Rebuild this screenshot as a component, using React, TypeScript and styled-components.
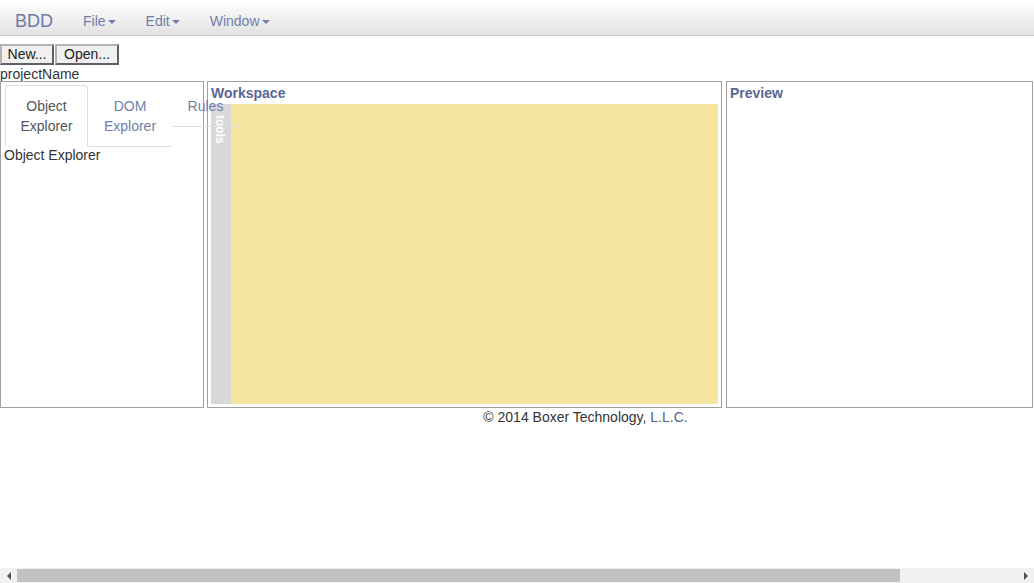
import React, { useState } from "react";
import styled, { createGlobalStyle } from "styled-components";

const GlobalStyle = createGlobalStyle`
  html, body {
    margin: 0;
    padding: 0;
    overflow: hidden;
  }
  body {
    font-family: "Liberation Sans", Arial, sans-serif;
    font-size: 14px;
    line-height: 20px;
    color: #333;
    background: #fff;
  }
`;

const Navbar = styled.div`
  height: 35px;
  border-bottom: 1px solid #c8c8c8;
  background: linear-gradient(to bottom, #ffffff 0%, #e2e2e2 100%);
  display: flex;
  align-items: flex-start;
`;

const Brand = styled.a`
  padding: 10px 15px 0;
  font-size: 18px;
  line-height: 22px;
  color: #6c7aa6;
  text-decoration: none;
`;

const NavItem = styled.a`
  padding: 11px 15px 0;
  color: #6f7fab;
  line-height: 20px;
  text-decoration: none;
  display: flex;
  align-items: center;
`;

const Caret = styled.span`
  display: inline-block;
  width: 0;
  height: 0;
  margin-left: 2px;
  margin-top: 2px;
  border-top: 4px solid #6f7fab;
  border-left: 4px solid transparent;
  border-right: 4px solid transparent;
`;

const Toolbar = styled.div`
  display: flex;
  gap: 1px;
  padding-top: 8px;
`;

const Button = styled.button<{ $width: number }>`
  width: ${(p) => p.$width}px;
  height: 21px;
  padding: 0;
  font-family: "Liberation Sans", Arial, sans-serif;
  font-size: 14px;
  line-height: 17px;
  color: #222;
  background: #f0f0f0;
  border: 2px outset #b4b4b4;
  margin: 0;
`;

const ProjectName = styled.div`
  height: 16px;
  line-height: 18px;
`;

const Panels = styled.div`
  width: 1034px;
  height: 327px;
  display: grid;
  grid-template-columns: 204px 515px 308px;
  column-gap: 3px;
`;

const Panel = styled.div<{ $gapLeft?: number }>`
  border: 1px solid #a0a0a0;
  margin-left: ${(p) => p.$gapLeft ?? 0}px;
  display: flex;
  flex-direction: column;
  min-width: 0;
`;

const ExplorerBody = styled.div`
  padding: 3px 0 0 4px;
`;

const Tabs = styled.ul`
  list-style: none;
  margin: 0;
  padding: 0;
  width: 167px;
  display: flex;
  align-items: flex-start;
`;

const Tab = styled.li<{ $active?: boolean; $width: number }>`
  flex: none;
  width: ${(p) => p.$width}px;
  box-sizing: border-box;
  padding: 10px 0;
  text-align: center;
  color: ${(p) => (p.$active ? "#555" : "#6f7fab")};
  border: 1px solid ${(p) => (p.$active ? "#ddd" : "transparent")};
  border-bottom-color: ${(p) => (p.$active ? "transparent" : "#ddd")};
  border-radius: ${(p) => (p.$active ? "4px 4px 0 0" : "0")};
  cursor: pointer;
  position: relative;
`;

const TabContent = styled.div`
  line-height: 16px;
  padding-left: 3px;
`;

const PanelTitle = styled.div`
  height: 21px;
  line-height: 21px;
  font-weight: bold;
  color: #5a6794;
`;

const PanelInner = styled.div`
  padding: 1px 3px 3px;
  flex: 1;
  display: flex;
  flex-direction: column;
`;

const Canvas = styled.div`
  flex: 1;
  display: flex;
`;

const ToolStrip = styled.div`
  width: 20px;
  background: #d8d8d8;
  color: #fff;
  font-weight: bold;
  font-size: 12px;
  writing-mode: vertical-rl;
  line-height: 22px;
  padding-top: 11px;
  box-sizing: border-box;
`;

const Stage = styled.div`
  flex: 1;
  background: #f5e59e;
`;

const Footer = styled.div`
  text-align: center;
  line-height: 18px;
  padding-left: 137px;
`;

const FooterLink = styled.a`
  color: #55618a;
  text-decoration: none;
`;

const ScrollBar = styled.div`
  position: fixed;
  left: 0;
  right: 0;
  bottom: 0;
  height: 15px;
  background: #f1f1f1;
  display: flex;
  align-items: center;
`;

const Arrow = styled.span<{ $dir: "left" | "right" }>`
  width: 17px;
  display: flex;
  justify-content: center;
  &::before {
    content: "";
    width: 0;
    height: 0;
    border-top: 4px solid transparent;
    border-bottom: 4px solid transparent;
    ${(p) =>
      p.$dir === "left"
        ? "border-right: 4px solid #505050;"
        : "border-left: 4px solid #505050;"}
  }
`;

const Track = styled.div`
  flex: 1;
  height: 13px;
`;

const Thumb = styled.div`
  height: 100%;
  background: #c1c1c1;
`;

const tabs = [
  { label: "Object Explorer", width: 83 },
  { label: "DOM Explorer", width: 84 },
  { label: "Rules", width: 67 },
];

export default function App() {
  const [active, setActive] = useState(0);
  const thumbRatio = 1034 / 1171;

  return (
    <>
      <GlobalStyle />
      <Navbar>
        <Brand>BDD</Brand>
        <NavItem>
          File
          <Caret />
        </NavItem>
        <NavItem>
          Edit
          <Caret />
        </NavItem>
        <NavItem>
          Window
          <Caret />
        </NavItem>
      </Navbar>
      <Toolbar>
        <Button $width={54}>New...</Button>
        <Button $width={64}>Open...</Button>
      </Toolbar>
      <ProjectName>projectName</ProjectName>
      <Panels>
        <Panel>
          <ExplorerBody>
            <Tabs>
              {tabs.map((t, i) => (
                <Tab
                  key={t.label}
                  $width={t.width}
                  $active={i === active}
                  onClick={() => setActive(i)}
                >
                  {t.label}
                </Tab>
              ))}
            </Tabs>
          </ExplorerBody>
          <TabContent>{tabs[active].label}</TabContent>
        </Panel>
        <Panel>
          <PanelInner>
            <PanelTitle>Workspace</PanelTitle>
            <Canvas>
              <ToolStrip>tools</ToolStrip>
              <Stage />
            </Canvas>
          </PanelInner>
        </Panel>
        <Panel $gapLeft={1}>
          <PanelInner>
            <PanelTitle>Preview</PanelTitle>
          </PanelInner>
        </Panel>
      </Panels>
      <Footer>
        © 2014 Boxer Technology, <FooterLink>L.L.C.</FooterLink>
      </Footer>
      <ScrollBar>
        <Arrow $dir="left" />
        <Track>
          <Thumb style={{ width: `${thumbRatio * 100}%` }} />
        </Track>
        <Arrow $dir="right" />
      </ScrollBar>
    </>
  );
}
